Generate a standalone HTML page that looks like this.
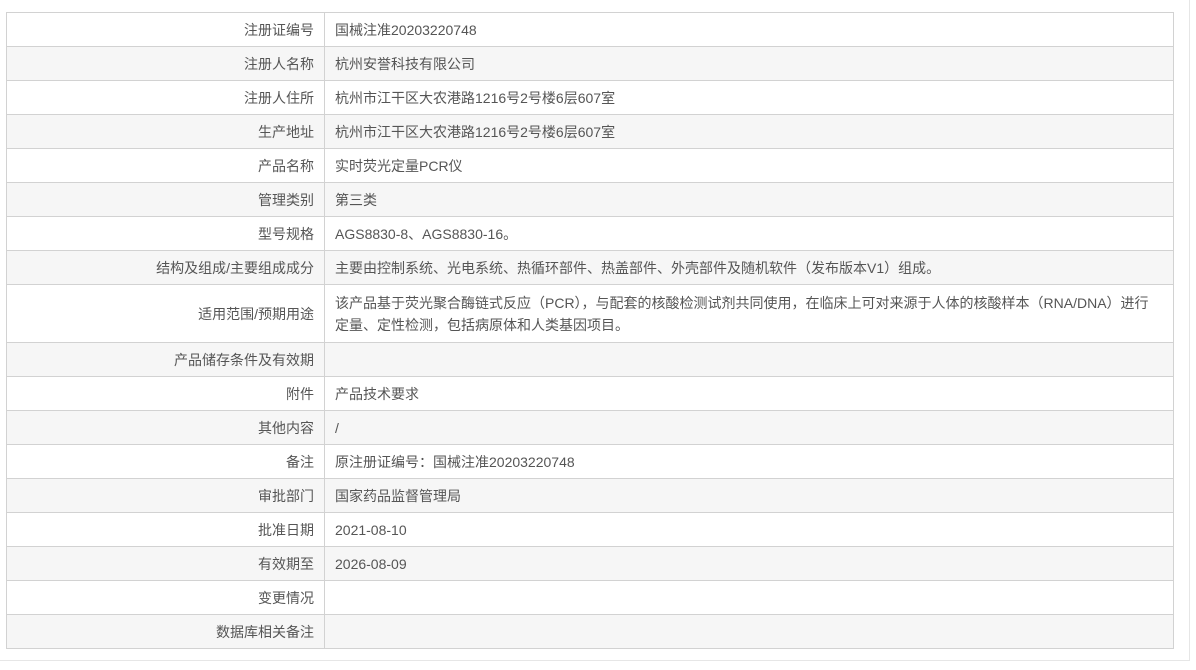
<!DOCTYPE html>
<html><head><meta charset="utf-8"><style>
html,body{margin:0;padding:0;background:#fff;width:1196px;height:670px;overflow:hidden}
.wrap{position:absolute;left:0;top:0;width:1189px;height:660px;border-right:1px solid #e6e6e6;border-bottom:1px solid #e6e6e6}
table{position:absolute;left:6px;top:12px;width:1168px;border-collapse:collapse;font-family:"Liberation Sans","Noto Sans CJK SC",sans-serif;font-size:14px;color:#555}
td{border:1px solid #d2d2d2;height:33px;padding:0 10px;line-height:22px}
td.l{width:297px;text-align:right}
tr:nth-child(even) td{background:#f6f6f6}
</style></head><body><div class="wrap"></div>
<table>
<tr><td class="l">注册证编号</td><td>国械注准20203220748</td></tr>
<tr><td class="l">注册人名称</td><td>杭州安誉科技有限公司</td></tr>
<tr><td class="l">注册人住所</td><td>杭州市江干区大农港路1216号2号楼6层607室</td></tr>
<tr><td class="l">生产地址</td><td>杭州市江干区大农港路1216号2号楼6层607室</td></tr>
<tr><td class="l">产品名称</td><td>实时荧光定量PCR仪</td></tr>
<tr><td class="l">管理类别</td><td>第三类</td></tr>
<tr><td class="l">型号规格</td><td>AGS8830-8、AGS8830-16。</td></tr>
<tr><td class="l">结构及组成/主要组成成分</td><td>主要由控制系统、光电系统、热循环部件、热盖部件、外壳部件及随机软件（发布版本V1）组成。</td></tr>
<tr><td class="l" style="height:57px">适用范围/预期用途</td><td>该产品基于荧光聚合酶链式反应（PCR），与配套的核酸检测试剂共同使用，在临床上可对来源于人体的核酸样本（RNA/DNA）进行<br>定量、定性检测，包括病原体和人类基因项目。</td></tr>
<tr><td class="l">产品储存条件及有效期</td><td></td></tr>
<tr><td class="l">附件</td><td>产品技术要求</td></tr>
<tr><td class="l">其他内容</td><td>/</td></tr>
<tr><td class="l">备注</td><td>原注册证编号：国械注准20203220748</td></tr>
<tr><td class="l">审批部门</td><td>国家药品监督管理局</td></tr>
<tr><td class="l">批准日期</td><td>2021-08-10</td></tr>
<tr><td class="l">有效期至</td><td>2026-08-09</td></tr>
<tr><td class="l">变更情况</td><td></td></tr>
<tr><td class="l">数据库相关备注</td><td></td></tr>
</table></body></html>
